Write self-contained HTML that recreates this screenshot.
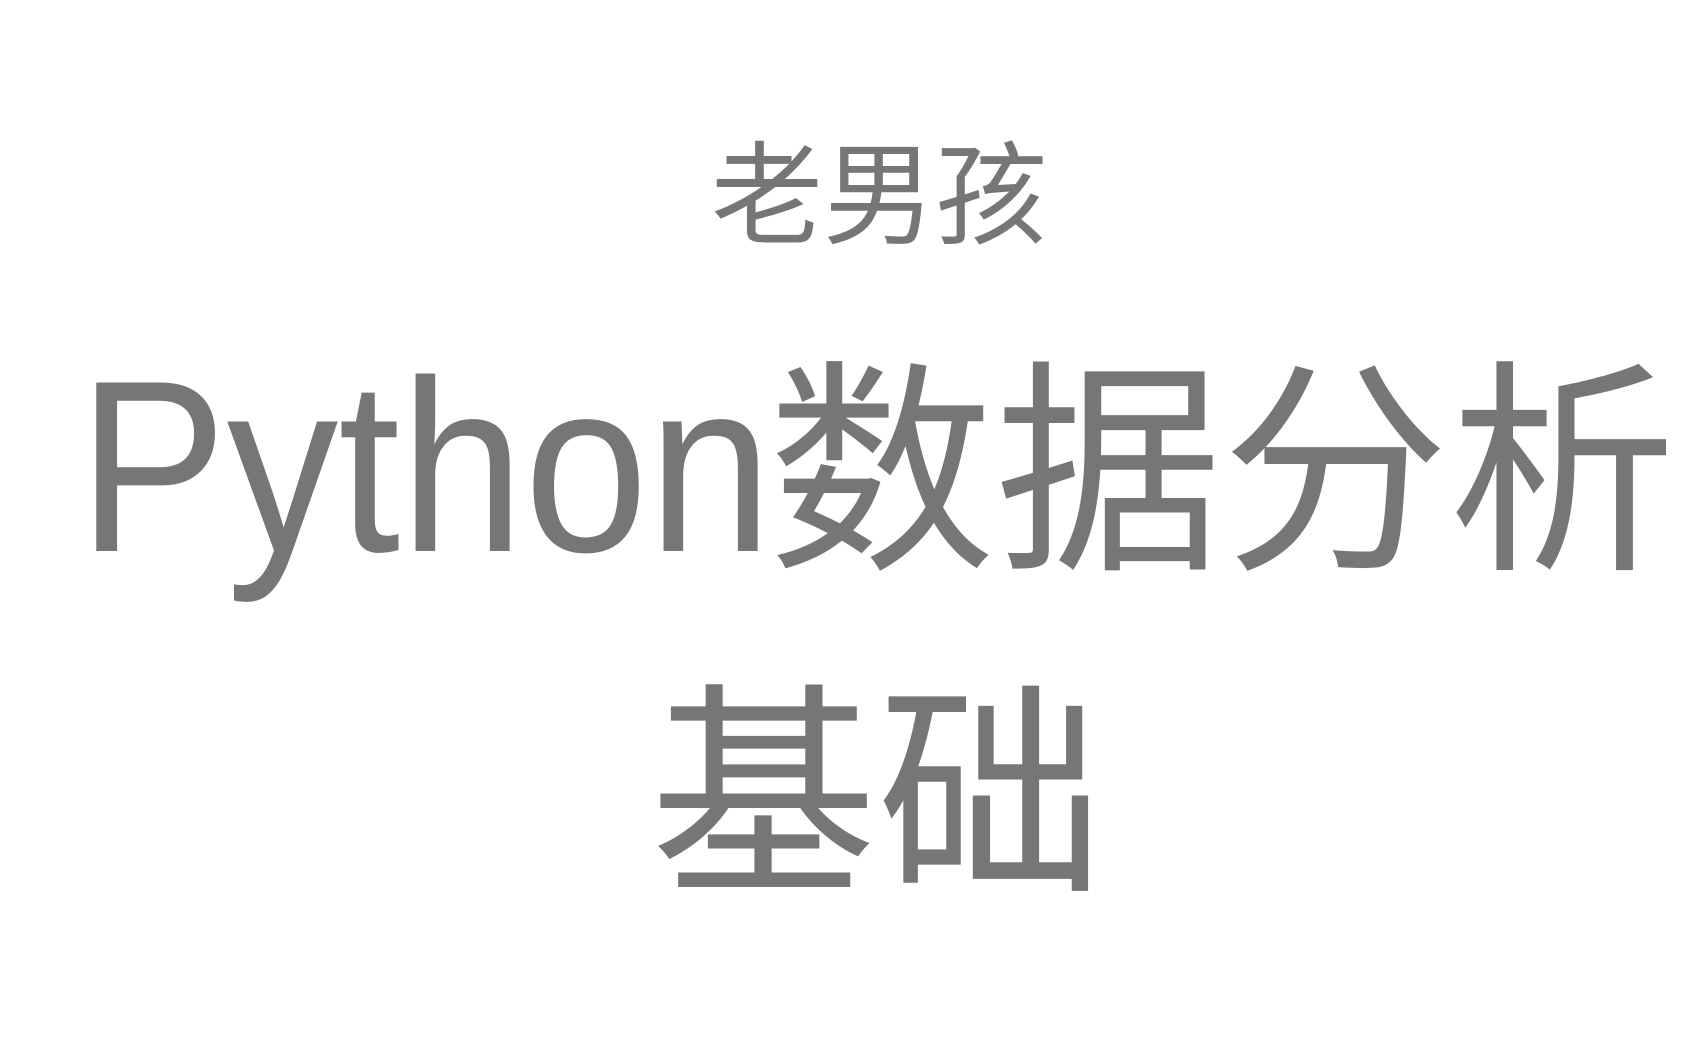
<!DOCTYPE html>
<html>
<head>
<meta charset="utf-8">
<style>
html,body{margin:0;padding:0;background:#fff;width:1689px;height:1055px;overflow:hidden;}
.t{position:absolute;color:#767676;line-height:1;white-space:nowrap;font-family:"Liberation Sans","Noto Sans CJK SC",sans-serif;}
.cjk{font-family:"Noto Sans CJK SC","WenQuanYi Zen Hei",sans-serif;}
</style>
</head>
<body>
<div class="t cjk" style="left:711px;top:131px;font-size:112px;">老男孩</div>
<div class="t" style="left:78px;top:344px;font-size:245px;transform:scaleX(0.91);transform-origin:left top;">Python</div>
<div class="t cjk" style="left:768px;top:341px;font-size:227px;">数据分析</div>
<div class="t cjk" style="left:650px;top:664px;font-size:227px;">基础</div>
</body>
</html>
